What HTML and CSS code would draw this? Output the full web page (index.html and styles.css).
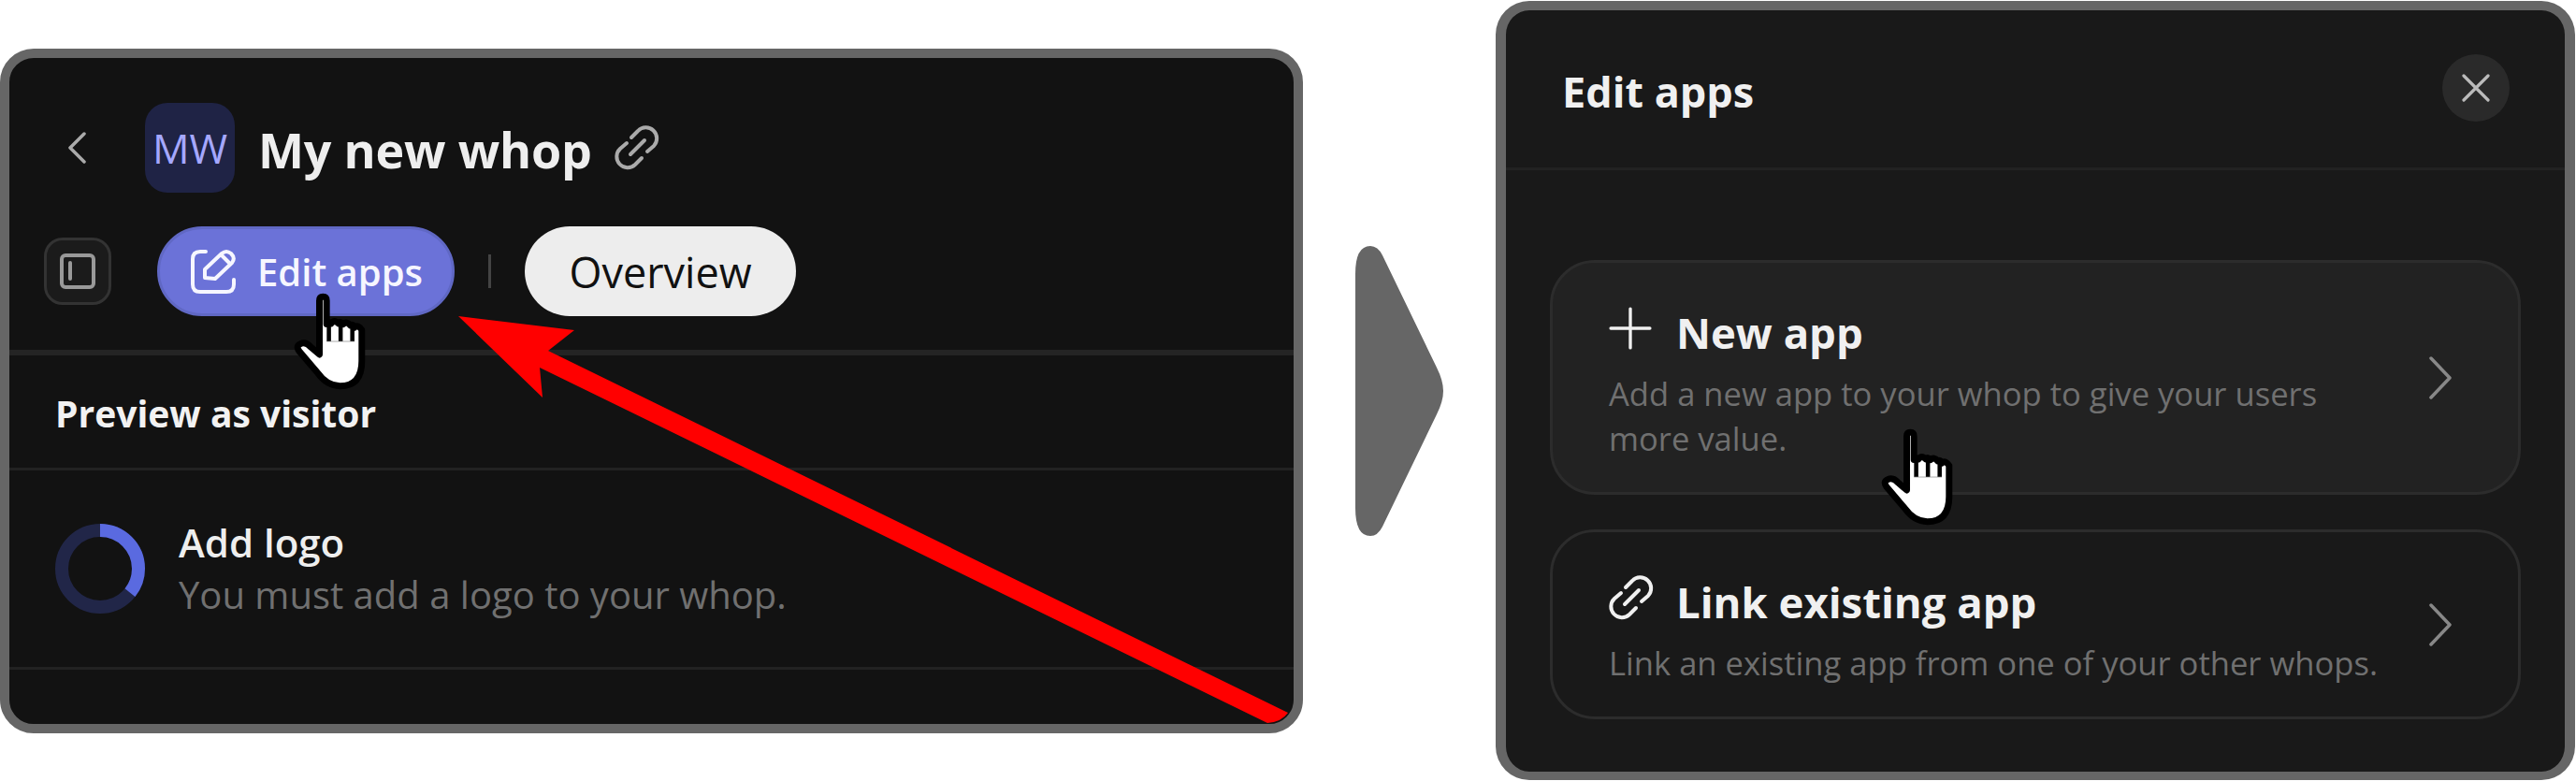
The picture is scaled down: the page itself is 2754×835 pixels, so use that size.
FILE: index.html
```html
<!DOCTYPE html>
<html lang="en">
<head>
<meta charset="utf-8">
<title>Edit apps</title>
<link rel="stylesheet" href="styles.css">
</head>
<body>
<svg class="defs" width="0" height="0" aria-hidden="true">
  <defs>
    <symbol id="hand" viewBox="55 50 240 310">
      <path d="M142 80Q142 68 153 68Q164 68 164 80L164 152Q172 142 178 150Q188 136 200 150Q207 142 215 152Q226 142 237 156Q244 150 250 162Q261 152 272 170L272 265Q272 342 205 342Q165 342 135 300L80 235Q68 218 85 212Q100 205 115 222L142 245Z" fill="#fff" stroke="#000" stroke-width="20" stroke-linejoin="round"/>
      <path d="M171 150V205M207 150V205M243 156V205" stroke="#000" stroke-width="13" fill="none"/>
      <path d="M164 205H250" stroke="#888" stroke-width="2" fill="none"/>
    </symbol>
    <symbol id="link" viewBox="0 0 48 48">
      <path d="M18 13L25 6A11.5 11.5 0 0 1 42 22L35 28M29 35L22 42A11.5 11.5 0 0 1 6 25L13 19M17 31L32 16" fill="none" stroke="currentColor" stroke-width="4" stroke-linecap="round" stroke-linejoin="round"/>
    </symbol>
    <symbol id="chev" viewBox="0 0 25 46">
      <path d="M2 2L22 23L2 44" fill="none" stroke="currentColor" stroke-width="3.5" stroke-linecap="round" stroke-linejoin="round"/>
    </symbol>
  </defs>
</svg>

<main class="stage">
  <section class="panel panel-left">
    <div class="row-head">
      <svg class="back" viewBox="0 0 19 34"><path d="M17 2L2 17L17 32" fill="none" stroke="currentColor" stroke-width="3.5" stroke-linecap="round" stroke-linejoin="round"/></svg>
      <div class="avatar">MW</div>
      <h1 class="whop-name">My new whop</h1>
      <svg class="whop-link"><use href="#link"/></svg>
    </div>
    <div class="row-tabs">
      <div class="side-btn">
        <svg class="side-icon" viewBox="0 0 38 38"><rect x="2" y="2" width="34" height="34" rx="4" fill="none" stroke="currentColor" stroke-width="4"/><path d="M11 10V27" stroke="currentColor" stroke-width="4" stroke-linecap="round" fill="none"/></svg>
      </div>
      <div class="pill pill-edit">
        <svg class="edit-icon" viewBox="0 0 48 48"><path d="M16 3H10Q2 3 2 11V38Q2 46 10 46H38Q46 46 46 38V33" fill="none" stroke="currentColor" stroke-width="4" stroke-linecap="round"/><path d="M15 31V22L33 5Q38 1 43 5Q48 10 44 15L26 32Z" fill="none" stroke="currentColor" stroke-width="4" stroke-linejoin="round"/><path d="M33 7L43 17" fill="none" stroke="currentColor" stroke-width="4"/></svg>
        <span>Edit apps</span>
      </div>
      <span class="vsep"></span>
      <div class="pill pill-over">Overview</div>
    </div>
    <div class="rule rule-thick"></div>
    <div class="preview">Preview as visitor</div>
    <div class="rule"></div>
    <div class="task">
      <svg class="ring" viewBox="0 0 96 96">
        <circle cx="48" cy="48" r="41" fill="none" stroke="#212648" stroke-width="14"/>
        <circle cx="48" cy="48" r="41" fill="none" stroke="#5a6ae0" stroke-width="14" stroke-dasharray="92 258" transform="rotate(-90 48 48)"/>
      </svg>
      <div class="task-text">
        <div class="task-title">Add logo</div>
        <div class="task-sub">You must add a logo to your whop.</div>
      </div>
    </div>
    <div class="rule"></div>
  </section>

  <svg class="between" viewBox="0 0 94 310"><path d="M0 30Q0 0 16 0Q24 0 29 10L87 130Q94 144 94 155Q94 166 87 180L29 300Q24 310 16 310Q0 310 0 280Z" fill="#666"/></svg>

  <section class="panel panel-right">
    <header class="modal-head">
      <h2 class="modal-title">Edit apps</h2>
      <div class="close"><svg viewBox="0 0 30 30"><path d="M2 2L28 28M28 2L2 28" fill="none" stroke="currentColor" stroke-width="3.2" stroke-linecap="round"/></svg></div>
    </header>
    <div class="cards">
      <article class="card card-hover">
        <div class="card-body">
          <div class="card-title">
            <svg class="plus" viewBox="0 0 44 44"><path d="M22 2V42M2 22H42" fill="none" stroke="currentColor" stroke-width="3.2" stroke-linecap="round"/></svg>
            <span>New app</span>
          </div>
          <p class="card-sub">Add a new app to your whop to give your users<br>more value.</p>
        </div>
        <svg class="chev"><use href="#chev"/></svg>
      </article>
      <article class="card">
        <div class="card-body">
          <div class="card-title">
            <svg class="link-ic"><use href="#link"/></svg>
            <span>Link existing app</span>
          </div>
          <p class="card-sub">Link an existing app from one of your other whops.</p>
        </div>
        <svg class="chev"><use href="#chev"/></svg>
      </article>
    </div>
  </section>

  <svg class="red-arrow" viewBox="0 0 1393 784"><path d="M490 338L614 353L586 375L1377 762Q1370 772 1355 773L577 393L580 425Z" fill="#f00"/></svg>
  <svg class="cursor cursor-a"><use href="#hand"/></svg>
  <svg class="cursor cursor-b"><use href="#hand"/></svg>
</main>
</body>
</html>
```

FILE: styles.css
```css
* { box-sizing: border-box; }
html, body { margin: 0; padding: 0; background: #fff; }
body { font-family: "Open Sans", "Noto Sans", "Liberation Sans", sans-serif; overflow: hidden; }
.defs { position: absolute; }
h1, h2, p { margin: 0; }

.stage { position: relative; width: 2754px; height: 835px; display: flex; align-items: flex-start; }

.panel { border: 10px solid #666; overflow: hidden; }
.panel-left { width: 1393px; height: 732px; margin-top: 52px; border-radius: 36px; background: #121212; color: #eee; }
.panel-right { width: 1154px; height: 833px; margin-top: 1px; border-radius: 36px; background: #191919; color: #eee; border-width: 10px 11px 9px 11px; }

.between { width: 94px; height: 310px; margin: 263px 56px 0 56px; flex: none; }

.row-head { display: flex; align-items: center; height: 96px; margin-top: 48px; padding-left: 63px; }
.back { width: 19px; height: 34px; color: #aaa; margin-right: 63px; }
.avatar { width: 96px; height: 96px; border-radius: 24px; background: #1f2345; color: #a5a8ff; font-size: 44px; display: flex; align-items: center; justify-content: center; }
.whop-name { font-size: 52px; font-weight: 700; margin-left: 25px; color: #eee; line-height: 1; letter-spacing: -0.2px; padding-top: 3px; }
.whop-link { width: 48px; height: 48px; color: #aaa; margin-left: 24px; }

.row-tabs { display: flex; align-items: center; height: 96px; margin-top: 36px; padding-left: 37px; }
.side-btn { width: 72px; height: 72px; border: 3px solid #333; border-radius: 20px; background: #1b1b1b; display: flex; align-items: center; justify-content: center; margin-right: 49px; }
.side-icon { width: 38px; height: 38px; color: #999; }
.pill { height: 96px; border-radius: 48px; display: flex; align-items: center; }
.pill-edit { width: 318px; padding-left: 33px; background: #6b72d8; border: 3px solid #6068c4; color: #f6f6ff; font-size: 40px; font-weight: 600; gap: 23px; }
.edit-icon { width: 48px; height: 48px; }
.vsep { width: 3px; height: 36px; background: #444; margin: 0 36px; }
.pill-over { width: 290px; justify-content: center; background: #ededed; color: #111; font-size: 45px; }

.rule { height: 3px; background: #222; }
.rule-thick { height: 6px; background: #242424; margin-top: 36px; }
.preview { height: 120px; padding: 34px 0 0 49px; font-size: 39px; font-weight: 700; line-height: 56px; color: #f2f2f2; }

.task { height: 210px; display: flex; align-items: center; padding-left: 49px; gap: 36px; }
.ring { width: 96px; height: 96px; flex: none; }
.task-title { font-size: 42px; font-weight: 600; line-height: 56px; color: #eee; }
.task-sub { font-size: 40px; line-height: 56px; color: #707070; }

.modal-head { height: 171px; border-bottom: 3px solid #222; display: flex; align-items: center; justify-content: space-between; padding: 0 59px 2px 60px; }
.modal-title { font-size: 45px; font-weight: 700; color: #f0f0f0; padding-top: 6px; }
.close { width: 72px; height: 72px; border-radius: 50%; background: #2a2a2a; color: #bbb; display: flex; align-items: center; justify-content: center; }
.close svg { width: 30px; height: 30px; }

.cards { display: flex; flex-direction: column; gap: 37px; padding: 96px 47px 0 47px; }
.card { border: 3px solid #2c2c2c; border-radius: 48px; display: flex; align-items: center; justify-content: space-between; padding: 0 70px 0 60px; }
.card-hover { height: 251px; background: #222; }
.card:not(.card-hover) { height: 203px; }
.card-body { padding-top: 5px; }
.card-title { display: flex; align-items: flex-start; gap: 26px; font-size: 45.5px; font-weight: 700; color: #f0f0f0; line-height: 62px; }
.card-title span { padding-top: 4px; }
.plus { width: 46px; height: 46px; flex: none; color: #f0f0f0; margin-top: 8px; }
.link-ic { width: 48px; height: 48px; flex: none; color: #f0f0f0; margin: 7px -2px 0 0; }
.card-sub { font-size: 34.6px; line-height: 48px; color: #707070; margin-top: 11px; }
.chev { width: 25px; height: 46px; color: #888; flex: none; }

.red-arrow { position: absolute; left: 0; top: 0; width: 1393px; height: 784px; }
.cursor { position: absolute; width: 84px; height: 108px; }
.cursor-a { left: 311px; top: 311px; }
.cursor-b { left: 2008px; top: 456px; }
```
